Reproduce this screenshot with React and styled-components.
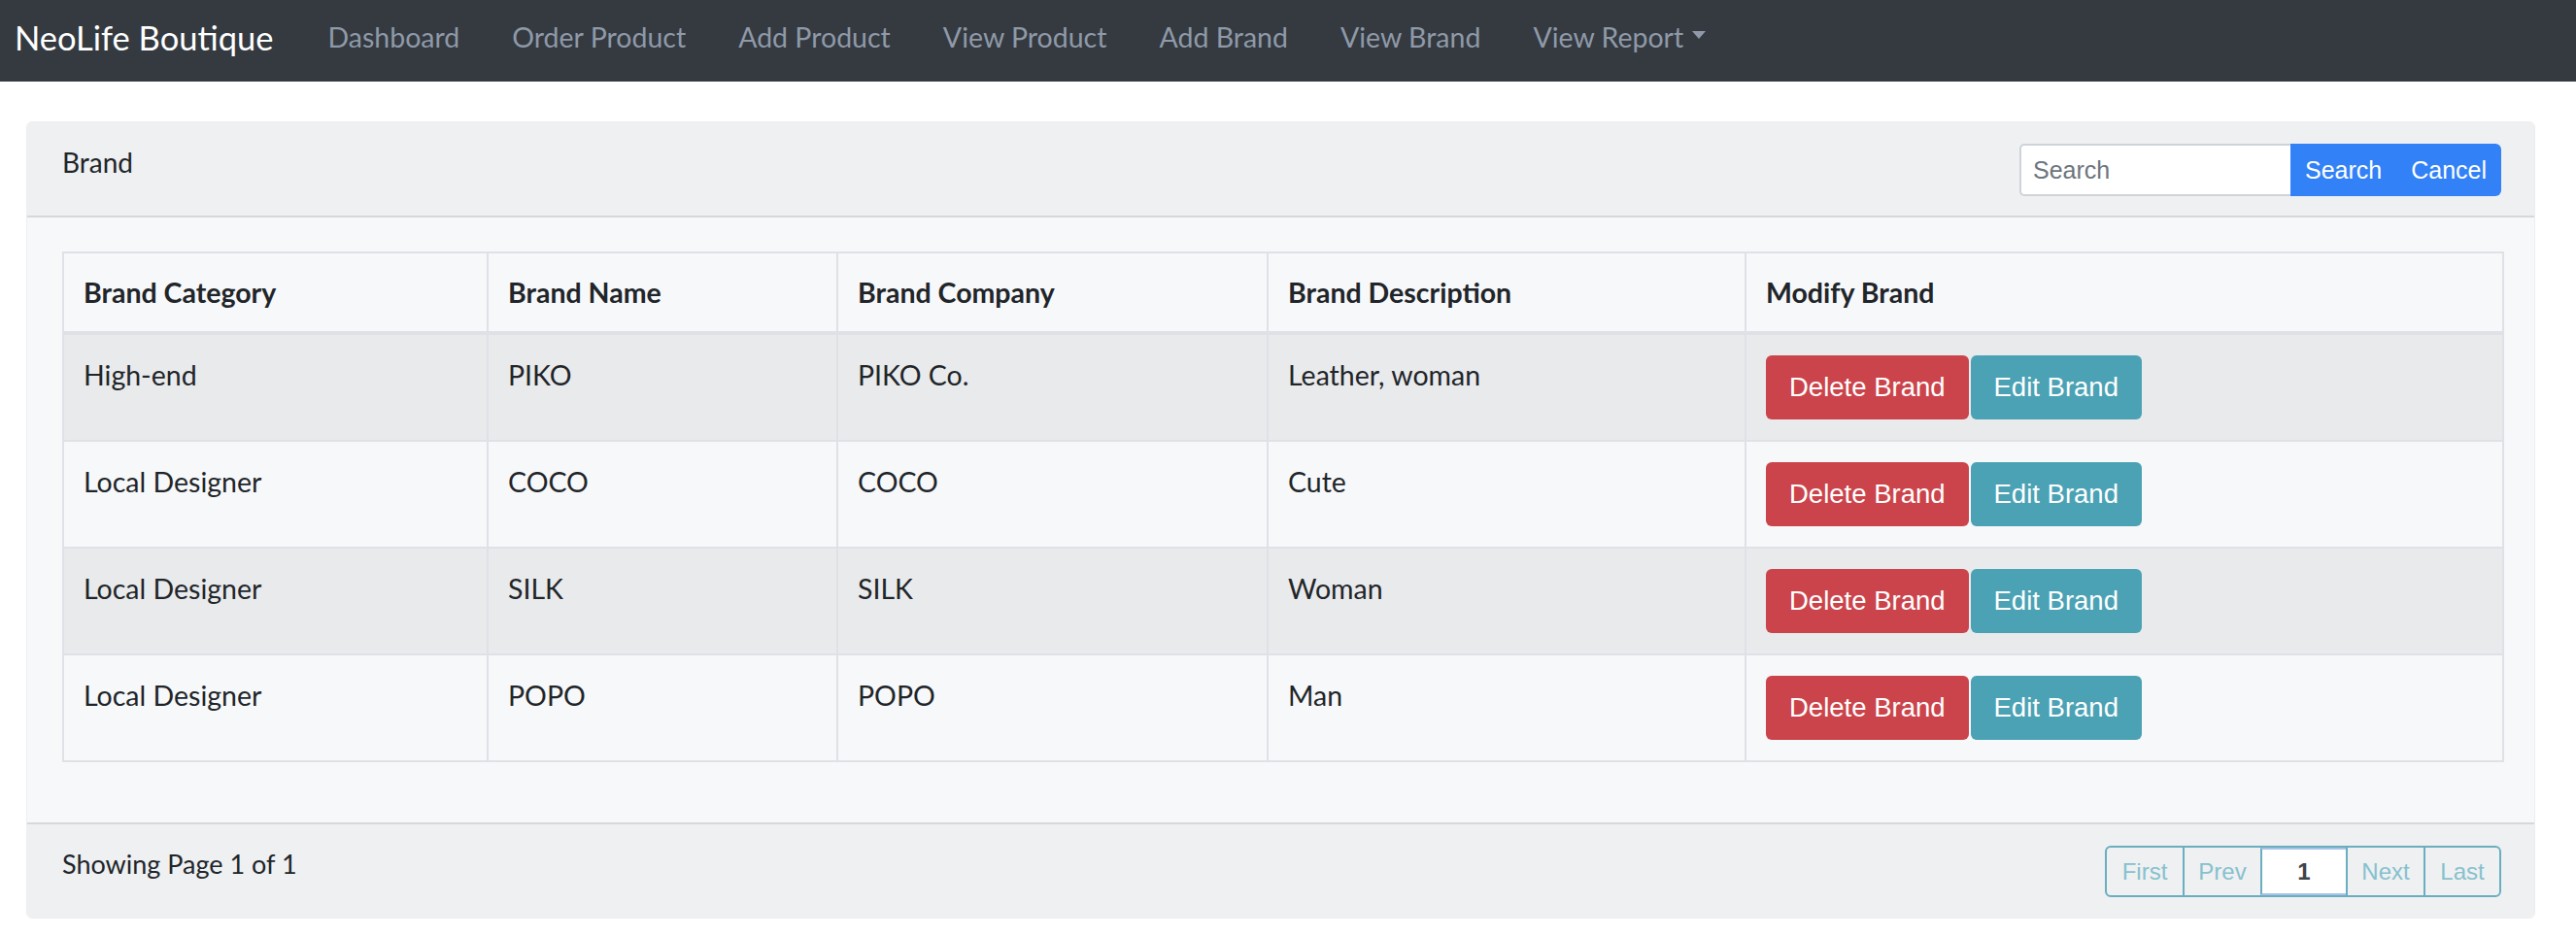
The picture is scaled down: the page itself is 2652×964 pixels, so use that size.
import React from 'react'
import styled, { createGlobalStyle } from 'styled-components'

//-----------------------------------------------------------------------------
// Data
//-----------------------------------------------------------------------------
const navLinks = ['Dashboard', 'Order Product', 'Add Product', 'View Product', 'Add Brand', 'View Brand']

const columns = [
  { title: 'Brand Category', width: 437 },
  { title: 'Brand Name', width: 360 },
  { title: 'Brand Company', width: 443 },
  { title: 'Brand Description', width: 492 },
  { title: 'Modify Brand', width: 780 }
]

const brands = [
  { category: 'High-end', name: 'PIKO', company: 'PIKO Co.', description: 'Leather, woman' },
  { category: 'Local Designer', name: 'COCO', company: 'COCO', description: 'Cute' },
  { category: 'Local Designer', name: 'SILK', company: 'SILK', description: 'Woman' },
  { category: 'Local Designer', name: 'POPO', company: 'POPO', description: 'Man' }
]

const pages = [
  { label: 'First', width: 78 },
  { label: 'Prev', width: 80 },
  { label: '1', width: 88, active: true },
  { label: 'Next', width: 80 },
  { label: 'Last', width: 78 }
]

//-----------------------------------------------------------------------------
// Component
//-----------------------------------------------------------------------------
export default function App() {
  return (
    <>
      <GlobalStyle />
      <Navbar>
        <NavBrand>NeoLife Boutique</NavBrand>
        <NavList>
          {navLinks.map(link => <NavLink key={link}>{link}</NavLink>)}
          <NavLink>
            View Report
            <Caret />
          </NavLink>
        </NavList>
      </Navbar>
      <Card>
        <CardHeader>
          <HeaderTitle>Brand</HeaderTitle>
          <SearchGroup>
            <SearchInput placeholder="Search" />
            <SearchButton>Search</SearchButton>
            <SearchButton last>Cancel</SearchButton>
          </SearchGroup>
        </CardHeader>
        <CardBody>
          <Table>
            <colgroup>
              {columns.map(col => <col key={col.title} style={{ width: col.width }} />)}
            </colgroup>
            <thead>
              <tr>
                {columns.map(col => <Th key={col.title}>{col.title}</Th>)}
              </tr>
            </thead>
            <tbody>
              {brands.map((brand, i) => (
                <Row key={brand.name} striped={i % 2 === 0}>
                  <Td>{brand.category}</Td>
                  <Td>{brand.name}</Td>
                  <Td>{brand.company}</Td>
                  <Td>{brand.description}</Td>
                  <Td>
                    <ActionButton variant="danger">Delete Brand</ActionButton>
                    <ActionButton variant="info">Edit Brand</ActionButton>
                  </Td>
                </Row>
              ))}
            </tbody>
          </Table>
        </CardBody>
        <CardFooter>
          <FooterText>Showing Page 1 of 1</FooterText>
          <Pagination>
            {pages.map(page => (
              <PageItem key={page.label} active={page.active} style={{ width: page.width }}>
                {page.label}
              </PageItem>
            ))}
          </Pagination>
        </CardFooter>
      </Card>
    </>
  )
}

//-----------------------------------------------------------------------------
// Styled Components
//-----------------------------------------------------------------------------
const GlobalStyle = createGlobalStyle`
  * { box-sizing: border-box; }
  body {
    margin: 0;
    background: #ffffff;
    font-family: Lato, "Open Sans", sans-serif;
    font-size: 28.5px;
    color: #212529;
  }
`

const Navbar = styled.nav`
  height: 84px;
  background-color: #343a40;
  display: flex;
  align-items: center;
  padding: 0 15px 8px;
`

const NavBrand = styled.div`
  font-size: 34.5px;
  color: #ffffff;
  margin-right: 29px;
  white-space: nowrap;
`

const NavList = styled.div`
  display: flex;
  align-items: center;
`

const NavLink = styled.div`
  font-size: 28.5px;
  color: #8f99a8;
  padding: 0 27px;
  white-space: nowrap;
  display: flex;
  align-items: center;
`

const Caret = styled.span`
  display: inline-block;
  margin-left: 9px;
  margin-top: -4px;
  border-top: 8px solid #8f99a8;
  border-left: 7px solid transparent;
  border-right: 7px solid transparent;
`

const Card = styled.div`
  margin: 41px 42px 0 27px;
  background-color: #f7f8fa;
  border: 1px solid #eceef1;
  border-radius: 6px;
  overflow: hidden;
`

const CardHeader = styled.div`
  display: flex;
  justify-content: space-between;
  align-items: flex-start;
  padding: 21px 34px 20px 36px;
  background-color: #eff0f2;
  border-bottom: 2px solid #d6d8dc;
`

const HeaderTitle = styled.div`
  font-size: 28px;
  line-height: 40px;
`

const SearchGroup = styled.div`
  display: flex;
  height: 54px;
  margin-top: 1px;
`

const SearchInput = styled.input`
  width: 279px;
  height: 54px;
  border: 2px solid #ced4da;
  border-right: none;
  border-radius: 5px 0 0 5px;
  padding: 0 12px;
  font-family: "Liberation Sans", Arial, sans-serif;
  font-size: 25px;
  color: #495057;
  background: #ffffff;
  outline: none;
  &::placeholder {
    color: #6c757d;
  }
`

const SearchButton = styled.button`
  height: 54px;
  border: none;
  margin: 0;
  background-color: #3281f6;
  color: #ffffff;
  font-family: "Liberation Sans", Arial, sans-serif;
  font-size: 25px;
  padding: 0 ${props => props.last ? '15px' : '15px'} 0 15px;
  border-radius: ${props => props.last ? '0 6px 6px 0' : '0'};
`

const CardBody = styled.div`
  padding: 35px 34px 36px 36px;
`

const Table = styled.table`
  width: 100%;
  border-collapse: collapse;
  table-layout: fixed;
  border: 2px solid #dfe1e6;
  margin-bottom: 26px;
`

const Th = styled.th`
  text-align: left;
  font-weight: 700;
  line-height: 40px;
  padding: 20px 20px;
  border: 2px solid #dfe1e6;
  border-bottom-width: 4px;
  background-color: #f7f8fa;
`

const Row = styled.tr`
  background-color: ${props => props.striped ? '#e9eaec' : '#f7f8fa'};
`

const Td = styled.td`
  vertical-align: top;
  line-height: 40px;
  padding: 21px 20px;
  border: 2px solid #dfe1e6;
  white-space: nowrap;
`

const ActionButton = styled.button`
  height: 66px;
  padding: 0 24px;
  border: none;
  border-radius: 6px;
  vertical-align: top;
  font-family: "Liberation Sans", Arial, sans-serif;
  font-size: 27.5px;
  color: #ffffff;
  margin-right: 2px;
  background-color: ${props => props.variant === 'danger' ? '#cb444b' : '#4ba2b5'};
`

const CardFooter = styled.div`
  display: flex;
  justify-content: space-between;
  align-items: flex-start;
  padding: 22px 34px 21px 36px;
  background-color: #eff0f2;
  border-top: 2px solid #d6d8dc;
`

const FooterText = styled.div`
  font-size: 27px;
  line-height: 38px;
`

const Pagination = styled.div`
  display: flex;
  height: 53px;
  border: 2px solid #6aaebf;
  border-radius: 6px;
  overflow: hidden;
`

const PageItem = styled.div`
  display: flex;
  align-items: center;
  justify-content: center;
  font-family: "Liberation Sans", Arial, sans-serif;
  font-size: 24px;
  font-weight: ${props => props.active ? 700 : 400};
  color: ${props => props.active ? '#3f434a' : '#86c1ce'};
  background-color: ${props => props.active ? '#ffffff' : 'transparent'};
  border-left: 2px solid #6aaebf;
  border-top: ${props => props.active ? '2px solid #a8c3e6' : 'none'};
  border-bottom: ${props => props.active ? '2px solid #a8c3e6' : 'none'};
  &:first-child {
    border-left: none;
  }
`
